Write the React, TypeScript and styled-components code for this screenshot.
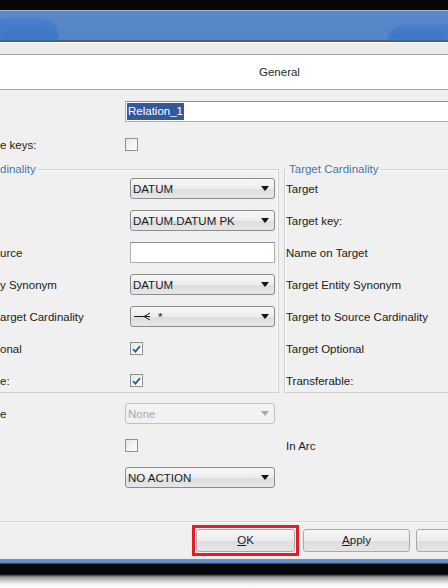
import styled, { createGlobalStyle } from "styled-components";

// Relation properties dialog, cropped as in the screenshot (left labels cut at the edge)

const GlobalStyle = createGlobalStyle`
  html, body {
    margin: 0;
    padding: 0;
    background: #ffffff;
    overflow: hidden;
  }
  body {
    font-family: "Liberation Sans", Tahoma, Arial, sans-serif;
    font-size: 11.5px;
    color: #1a1a1a;
  }
`;

const Screen = styled.div`
  width: 448px;
  height: 588px;
  overflow: hidden;
  display: flex;
  flex-direction: column;
  background: #f0f0f0;
`;

const TopEdge = styled.div`
  height: 10px;
  flex-shrink: 0;
  background: #060606;
`;

const TitleBar = styled.div`
  height: 29px;
  flex-shrink: 0;
  border-top: 1px solid #a3b9de;
  border-bottom: 2px solid #4f5a78;
  background: linear-gradient(#5b88c9, #5385c9);
  display: flex;
  justify-content: space-between;
  align-items: flex-end;
`;

const CaptionGlow = styled.div<{ $side: "left" | "right" }>`
  width: ${({ $side }) => ($side === "left" ? "58px" : "60px")};
  height: ${({ $side }) => ($side === "left" ? "22px" : "16px")};
  background: linear-gradient(#4a80cb, #3a76c4);
  border-radius: ${({ $side }) => ($side === "left" ? "0 16px 0 0" : "16px 0 0 0")};
  filter: blur(1px);
`;

const Strip = styled.div`
  height: 11px;
  flex-shrink: 0;
  border-top: 1px solid #fafafa;
  border-bottom: 1px solid #9c9c9c;
  background: #ececec;
`;

const HeaderTab = styled.div`
  height: 34px;
  flex-shrink: 0;
  background: #ffffff;
  border-bottom: 1px solid #a5a5a5;
  display: flex;
  align-items: center;
  padding-left: 259px;
  color: #2a2a2a;
`;

const Content = styled.div`
  flex: 1;
  padding-top: 11px;
  overflow: hidden;
  display: flex;
  flex-direction: column;
`;

const TopRows = styled.div`
  display: flex;
  flex-direction: column;
  gap: 12px;
`;

const Row = styled.div<{ $labelWidth: number }>`
  height: 21px;
  display: grid;
  grid-template-columns: ${({ $labelWidth }) => `${$labelWidth}px`} 1fr;
  align-items: center;
`;

const Label = styled.span`
  white-space: nowrap;
`;

const Frames = styled.div`
  display: flex;
  gap: 5px;
  margin-top: 8px;
`;

const Frame = styled.fieldset<{ $width: number }>`
  margin: 0;
  width: ${({ $width }) => `${$width}px`};
  flex-shrink: 0;
  box-sizing: border-box;
  padding: 3px 3px 1px 0;
  border: 1px solid #d0d0d0;
  border-left: none;
  box-shadow: inset -1px 1px 0 #fbfbfb;
  display: flex;
  flex-direction: column;
  gap: 11px;
  min-width: 0;
`;

const RightFrame = styled(Frame)`
  padding-left: 1px;
  border-left: 1px solid #d0d0d0;
  border-right: none;
  box-shadow: inset 1px 1px 0 #fbfbfb;
`;

const Legend = styled.legend<{ $inset: number }>`
  padding: 0 2px 0 ${({ $inset }) => `${$inset}px`};
  color: #4a73ad;
  white-space: nowrap;
`;

const PlainRow = styled.div`
  height: 21px;
  display: flex;
  align-items: center;
  white-space: nowrap;
`;

const LowerRows = styled.div`
  display: flex;
  flex-direction: column;
  gap: 11px;
  margin-top: 10px;
`;

const LowerRow = styled.div`
  height: 21px;
  display: grid;
  grid-template-columns: 125px 150px 11px 1fr;
  align-items: center;
`;

const TextInput = styled.div<{ $wide?: boolean }>`
  height: 21px;
  box-sizing: border-box;
  width: ${({ $wide }) => ($wide ? "420px" : "145px")};
  border: 1px solid #abadb3;
  border-top-color: #8e8f8f;
  background: #ffffff;
  display: flex;
  align-items: center;
  padding-left: 1px;
`;

const Selected = styled.span`
  background: #33589b;
  color: #ffffff;
  padding: 1px 1px 2px;
  line-height: 14px;
`;

const Select = styled.div<{ $disabled?: boolean; $width?: number }>`
  height: 21px;
  width: ${({ $width }) => `${$width ?? 145}px`};
  box-sizing: border-box;
  border: 1px solid ${({ $disabled }) => ($disabled ? "#c2c2c2" : "#8b8b8b")};
  border-radius: 3px;
  background: ${({ $disabled }) =>
    $disabled ? "#f2f2f2" : "linear-gradient(#f8f8f8 0%, #ececec 50%, #dedede 51%, #e6e6e6 100%)"};
  color: ${({ $disabled }) => ($disabled ? "#a8a8a8" : "#1a1a1a")};
  display: flex;
  align-items: center;
  justify-content: space-between;
  padding: 0 5px 0 2px;
  white-space: nowrap;
`;

const Arrow = styled.span<{ $disabled?: boolean }>`
  width: 0;
  height: 0;
  border-left: 4px solid transparent;
  border-right: 4px solid transparent;
  border-top: 5px solid ${({ $disabled }) => ($disabled ? "#a8a8a8" : "#111111")};
`;

const Box = styled.span`
  width: 13px;
  height: 13px;
  box-sizing: border-box;
  border: 1px solid #8f8f8f;
  background: linear-gradient(135deg, #e6e6e6, #ffffff);
  display: flex;
  align-items: center;
  justify-content: center;
`;

const Inline = styled.span`
  display: inline-flex;
  align-items: center;
  gap: 3px;
`;

const Footer = styled.div`
  height: 36px;
  flex-shrink: 0;
  border-top: 1px solid #d6d6d6;
  box-shadow: inset 0 1px 0 #fbfbfb;
  display: flex;
  align-items: center;
  gap: 6px;
  padding-left: 192px;
`;

// red annotation rectangle drawn round the OK button in the screenshot
const Marker = styled.div`
  border: 3px solid #e21d27;
  padding: 1px;
  margin-right: -2px;
  display: flex;
`;

const Button = styled.div<{ $width: number }>`
  width: ${({ $width }) => `${$width}px`};
  height: 23px;
  flex-shrink: 0;
  box-sizing: border-box;
  border: 1px solid #a9a9a9;
  border-radius: 3px;
  background: linear-gradient(#f6f6f6 0%, #ececec 50%, #dedede 51%, #e4e4e4 100%);
  display: flex;
  align-items: center;
  justify-content: center;
  color: #1a1a1a;

  u {
    text-decoration: underline;
  }
`;

const BottomFrame = styled.div`
  height: 30px;
  flex-shrink: 0;
  background: linear-gradient(
    #e9e9e9 0px,
    #e9e9e9 1px,
    #6f93cf 1px,
    #5a86c8 5px,
    #0a0a0a 6px,
    #050505 16px,
    #9a9a9a 19px,
    #f4f4f4 26px,
    #ffffff 30px
  );
`;

function Check({ checked }: { checked?: boolean }) {
  return (
    <Box>
      {checked && (
        <svg width="9" height="8" viewBox="0 0 9 8">
          <path d="M1 4.2 L3.4 6.6 L8 1.2" fill="none" stroke="#2b5bb4" strokeWidth="1.8" />
        </svg>
      )}
    </Box>
  );
}

function CrowFoot() {
  return (
    <svg width="22" height="9" viewBox="0 0 22 9">
      <path d="M1 4.5 H17 M11 4.5 L17 1 M11 4.5 L17 8" fill="none" stroke="#1a1a1a" strokeWidth="1" />
    </svg>
  );
}

// label text as far as it shows inside the cropped picture
const sourceRows = [
  { label: "", control: <Select>DATUM<Arrow /></Select> },
  { label: "", control: <Select>DATUM.DATUM PK<Arrow /></Select> },
  { label: "urce", control: <TextInput /> },
  { label: "y Synonym", control: <Select>DATUM<Arrow /></Select> },
  {
    label: "arget Cardinality",
    control: (
      <Select>
        <Inline>
          <CrowFoot />*
        </Inline>
        <Arrow />
      </Select>
    ),
  },
  { label: "onal", control: <Check checked /> },
  { label: "e:", control: <Check checked /> },
];

const targetLabels = [
  "Target",
  "Target key:",
  "Name on Target",
  "Target Entity Synonym",
  "Target to Source Cardinality",
  "Target Optional",
  "Transferable:",
];

export default function App() {
  return (
    <>
      <GlobalStyle />
      <Screen>
        <TopEdge />
        <TitleBar>
          <CaptionGlow $side="left" />
          <CaptionGlow $side="right" />
        </TitleBar>
        <Strip />
        <HeaderTab>General</HeaderTab>

        <Content>
          <TopRows>
            <Row $labelWidth={125}>
              <Label />
              <TextInput $wide>
                <Selected>Relation_1</Selected>
              </TextInput>
            </Row>
            <Row $labelWidth={125}>
              <Label>e keys:</Label>
              <Check />
            </Row>
          </TopRows>

          <Frames>
            <Frame $width={279}>
              <Legend $inset={0}>dinality</Legend>
              {sourceRows.map((r, idx) => (
                <Row key={idx} $labelWidth={130}>
                  <Label>{r.label}</Label>
                  {r.control}
                </Row>
              ))}
            </Frame>
            <RightFrame $width={170}>
              <Legend $inset={3}>Target Cardinality</Legend>
              {targetLabels.map((t) => (
                <PlainRow key={t}>{t}</PlainRow>
              ))}
            </RightFrame>
          </Frames>

          <LowerRows>
            <LowerRow>
              <Label>e</Label>
              <Select $disabled $width={150}>
                None
                <Arrow $disabled />
              </Select>
            </LowerRow>
            <LowerRow>
              <Label />
              <Check />
              <span />
              <Label>In Arc</Label>
            </LowerRow>
            <LowerRow>
              <Label />
              <Select $width={150}>
                NO ACTION
                <Arrow />
              </Select>
            </LowerRow>
          </LowerRows>
        </Content>

        <Footer>
          <Marker>
            <Button $width={99}>
              <span>
                <u>O</u>K
              </span>
            </Button>
          </Marker>
          <Button $width={107}>
            <span>
              <u>A</u>pply
            </span>
          </Button>
          <Button $width={107} />
        </Footer>
        <BottomFrame />
      </Screen>
    </>
  );
}
